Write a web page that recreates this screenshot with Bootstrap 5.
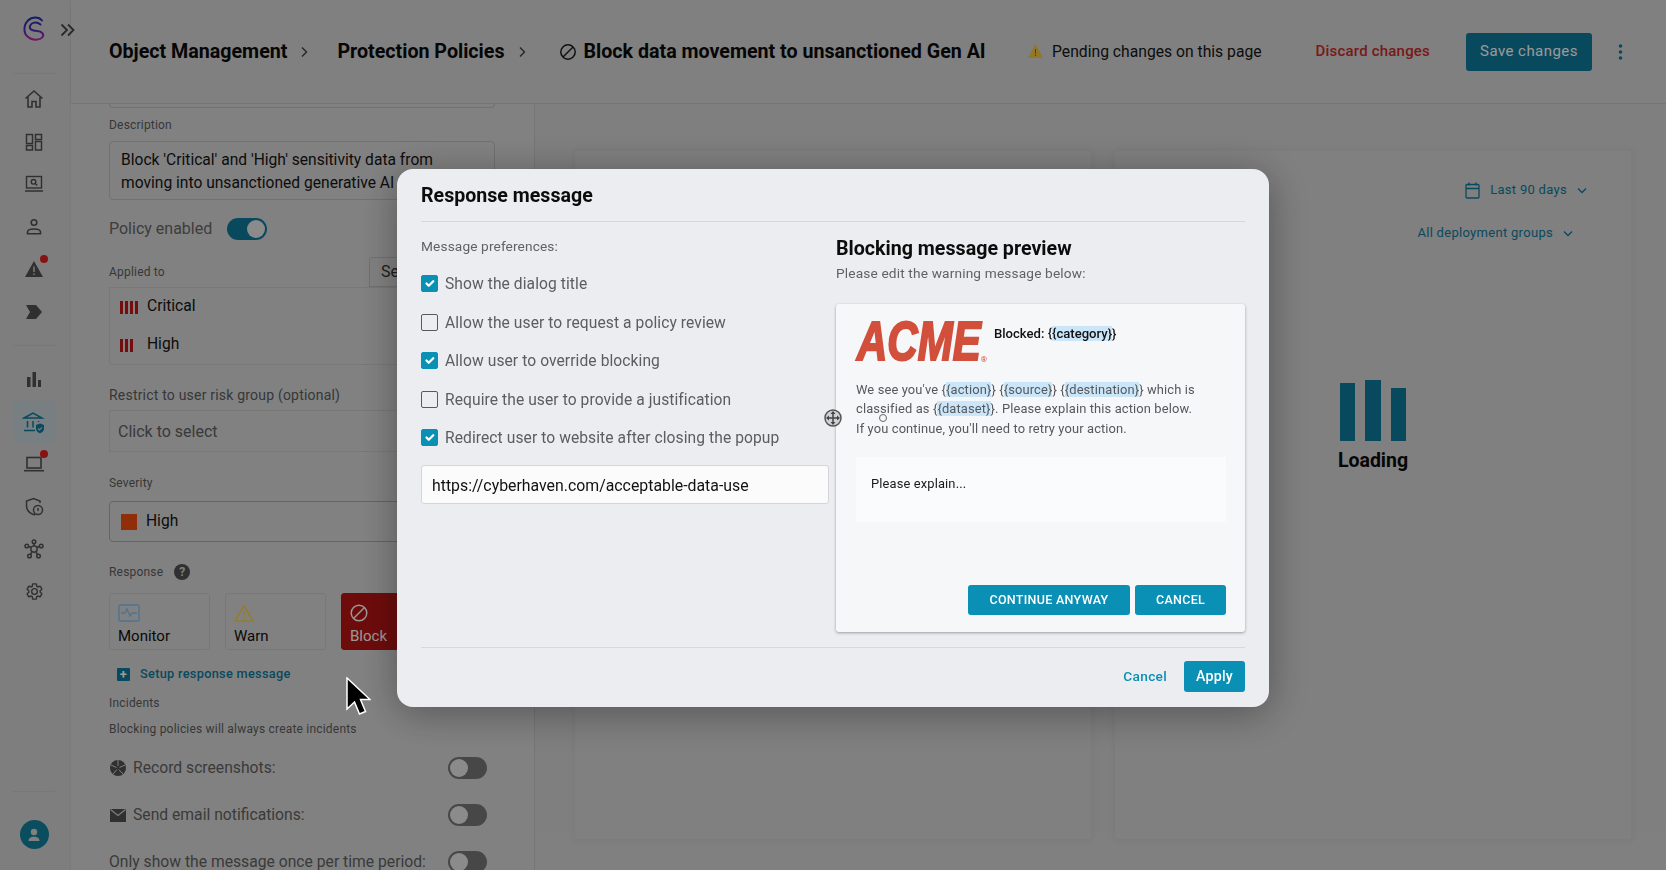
<!doctype html>
<html lang="en">
<head>
<meta charset="utf-8">
<title>Block data movement to unsanctioned Gen AI</title>
<link href="https://cdn.jsdelivr.net/npm/bootstrap@5.3.0/dist/css/bootstrap.min.css" rel="stylesheet">
<style>
html,body{height:100%;overflow:hidden}
body{font-family:Roboto,"Liberation Sans",sans-serif;background:#d5d5d5;color:#0a0a0a}
.modal-backdrop.show{opacity:.4}
.app-shell{height:870px}
.side-rail{width:71px;flex:none;background:#d3d3d3;border-right:1px solid #cdcdcd}
.rail-logo{height:74px;margin:0 15px 0 13px;border-bottom:1px solid #c8c8c8;position:relative}
.rail-logo .lg{position:absolute;left:8px;top:15px}
.rail-logo .ex{position:absolute;left:46px;top:21px}
.rail-group{padding-top:4px}
.rail-sep{height:1px;background:#c8c8c8;margin:12px 15px 12px 13px}
.rail-item{height:42.5px;margin:0 15px 0 13px;position:relative;border-radius:4px;color:#505050}
.rail-item.on{background:#c6d4da;color:#107a9b}
.rail-dot{position:absolute;width:8px;height:8px;border-radius:50%;background:#e02020;right:7px;top:7px}
.rail-foot{margin:auto 15px 0 13px;border-top:1px solid #c8c8c8;height:79px}
.user-pic{width:29px;height:29px;margin-top:28px;border-radius:50%;background:#12809f}
.main-col{min-width:0}
.top-head{height:104px;flex:none;padding:0 43px 0 38px;background:#d5d5d5;border-bottom:1px solid #c4c4c4;box-shadow:0 1px 3px rgba(0,0,0,.08)}
.crumb{font-size:19.65px;font-weight:700;white-space:nowrap}
.crumb-sep{margin:0 28px 0 13px;color:#404040}
.block-ic{margin:0 7px 0 4px}
.pend-txt{font-size:15.7px;color:#161616;margin-left:9px;white-space:nowrap}
.pend-box{margin-right:54px}
.discard{font-size:15px;font-weight:500;color:#cb2a2a;letter-spacing:.2px;margin-right:36px;white-space:nowrap}
.save-btn{width:126px;height:38px;background:#107a9b;border:0;color:#fff;border-radius:3px;font-size:15px;font-weight:400;letter-spacing:.45px;padding:0}
.more-dots{margin-left:26px;color:#107a9b}
.form-pane{width:464px;flex:none;padding:0 39px 0 38px;background:#d8d8d8;border-right:1px solid #c4c4c4;overflow:hidden}
.clip-box{height:4px;border:1px solid #bdbdbd;border-top:0;border-radius:0 0 4px 4px}
.tiny-lab{font-size:12px;line-height:16px;color:#5c5c5c;letter-spacing:.2px}
.lab-desc{margin-top:9px}
.mid-lab{font-size:14px;line-height:20px;color:#5c5c5c;letter-spacing:.2px;margin-top:20px}
.desc-box{margin-top:8px;height:59px;padding:7px 11px;border:1px solid #bdbdbd;border-radius:4px;font-size:15.6px;line-height:23px;color:#141414;white-space:nowrap;overflow:hidden}
.pol-row{margin-top:18px;height:22px;font-size:16px;color:#666;gap:15px}
.sw{width:39px;height:22px;border-radius:11px;background:#777;position:relative;flex:none}
.sw::after{content:"";position:absolute;left:2px;top:2px;width:18px;height:18px;border-radius:50%;background:#e8e8e8}
.sw.on{background:#107a9b;width:40px}
.sw.on::after{left:20px}
.apply-row{margin-top:17px;height:30px}
.sel-btn{margin-left:auto;width:126px;height:30px;border:1px solid #bdbdbd;border-radius:3px 3px 0 0;padding:2px 11px;font-size:16px;color:#333}
.sev-list{height:78px;border:1px solid #c8c8c8;border-radius:0 0 3px 3px}
.sev-li{height:38px;padding-left:10px;font-size:15.6px;color:#141414;gap:9px}
.sbars{gap:2px;width:18px;height:13px}
.sbars i{display:block;width:3px;height:13px;background:#c21717}
.pick-box{margin-top:5px;height:42px;border:1px solid #c8c8c8;padding:0 8px;font-size:16px;color:#606060;line-height:42px}
.lab-sev{margin-top:23px}
.sev-box{margin-top:10px;height:41px;border:1px solid #a8a8a8;border-radius:4px;padding-left:11px;font-size:15.6px;color:#141414}
.sev-sq{width:16px;height:16px;background:#f04e10;margin-right:9px}
.help-dot{width:16px;height:16px;border-radius:50%;background:#505050;color:#d5d5d5;font-size:12px;font-weight:700;line-height:16px;text-align:center;margin-left:11px}
.lab-resp{margin-top:22px}
.resp-row{margin-top:13px;gap:15px}
.resp-card{width:101px;height:57px;flex:none;border:1px solid #c8c8c8;border-radius:3px;padding:10px 8px 0;font-size:15px;line-height:20px;color:#0f0f0f}
.resp-card svg{display:block;margin-bottom:4px}
.resp-card.act{background:#b81414;border-color:#b81414;color:#fff}
.setup-row{margin:14px 0 0 8px;height:20px;font-size:12.75px;font-weight:500;color:#107a9b;letter-spacing:.3px}
.setup-ic{width:13px;height:13px;background:#107a9b;color:#fff;font-size:13px;font-weight:700;line-height:13px;text-align:center;margin-right:10px;border-radius:1px}
.lab-inc{margin-top:11px}
.lab-blk{margin:10px 0 20px}
.opt-row{height:22px;font-size:15.7px;color:#626262;margin-bottom:25px;white-space:nowrap}
.opt-row .sw{margin-left:auto;margin-right:8px}
.opt-ic{margin-right:7px;margin-left:1px}
.chart-zone{padding:46px 34px 0 39px;gap:22px;height:727px;background:#d4d4d4}
.chart-card{flex:1 1 0;height:690px;background:#d5d5d5;border:1px solid #cfcfcf;box-shadow:0 0 8px rgba(0,0,0,.05);border-radius:3px}
.filt-wrap{padding:28px 44px 0 0}
.filt-row{height:22px;font-size:13px;font-weight:400;color:#107a9b;letter-spacing:.3px;justify-content:flex-end;gap:10px}
.filt-row+.filt-row{margin-top:21px;padding-right:14px}
.load-bars{height:61px;margin-top:136px;gap:10px}
.load-bars i{display:block;width:15.5px;background:#107a9b}
.load-bars .b1{height:58px}.load-bars .b2{height:61px}.load-bars .b3{height:53px}
.load-txt{font-size:19.5px;font-weight:700;color:#0a0a0a;text-align:center;margin-top:8px;line-height:24px}
.resp-dialog{max-width:872px;margin:169px auto 0}
.resp-dialog .modal-content{height:538px;background:#ebedf0;border:0;border-radius:16px;padding:0 24px;box-shadow:0 6px 40px rgba(0,0,0,.35)}
.resp-dialog .modal-header{height:53px;padding:0;border-bottom:1px solid #d6d8dc;align-items:flex-end;padding-bottom:13px}
.resp-dialog .modal-title{font-size:19.6px;font-weight:700;line-height:24px;color:#0c0c0c}
.resp-dialog .modal-body{height:425px;flex:none;padding:0;gap:7px}
.resp-dialog .modal-footer{height:60px;padding:0 0 2px;border-top:1px solid #d6d8dc;gap:16px;flex-wrap:nowrap}
.resp-dialog .modal-footer>*{margin:0}
.pref-col{width:408px;flex:none;padding-top:15px}
.prev-col{flex:1;min-width:0;padding-top:15px}
.pref-lab{font-size:13.7px;line-height:18px;color:#5f6266;letter-spacing:.12px;margin-bottom:18px}
.pref-check{min-height:0;height:38.6px;margin:0;padding:0;display:flex;align-items:flex-start;gap:7px}
.pref-check .form-check-input{width:17px;height:17px;margin:2px 0 0 0;float:none;flex:none;border:1.5px solid #5a5a5a;border-radius:2px;background-color:transparent}
.pref-check .form-check-input:checked{background-color:#0a8fb5;border-color:#0a8fb5}
.pref-check .form-check-label{font-size:15.6px;line-height:21px;padding-top:1px;color:#5a5d61;letter-spacing:.08px}
.url-input{height:39px;margin-top:-.5px;padding:1px 10px 0;font-size:15.85px;color:#111;background:#fbfbfc;border:1px solid #d4d6da;border-radius:3px}
.prev-h{font-size:19.65px;font-weight:700;line-height:24px;color:#0c0c0c;margin:0}
.prev-sub{font-size:13.7px;line-height:18px;margin:3px 0 22px;color:#5f6266;letter-spacing:.15px}
.prev-card{height:328px;background:#f6f7f9;border-radius:3px;box-shadow:0 1px 3px rgba(0,0,0,.35);padding:17px 19px 17px 20px}
.acme-box{width:129px;height:40px;flex:none;position:relative;margin-right:9px;overflow:visible}
.acme-word{position:absolute;left:1px;top:-1px;font-family:"Liberation Sans",sans-serif;font-weight:700;font-style:italic;font-size:56px;line-height:42px;color:#d24f3b;-webkit-text-stroke:2.2px #d24f3b;transform:scaleX(.75);transform-origin:0 0;white-space:nowrap}
.acme-reg{position:absolute;right:-2px;bottom:-3px;font-size:8px;line-height:8px;color:#d24f3b}
.block-ttl{font-size:13.1px;font-weight:500;line-height:17px;color:#111;margin-top:4px}
.tok{background:#cbe6f9}
.msg-txt{margin:19px 0 0;font-size:12.9px;line-height:19.4px;color:#55585c;letter-spacing:.13px;white-space:nowrap}
.explain{height:65px;margin-top:19px;background:#fafbfc;padding:17px 15px;font-size:12.9px;line-height:20px;color:#1a1a1a;letter-spacing:.14px}
.act-row{margin-top:63px;gap:5px}
.act-btn{height:30px;background:#0a8fb5;border:0;border-radius:3px;color:#fff;font-size:12.5px;font-weight:500;letter-spacing:.3px;padding:1px 0 0;white-space:nowrap}
.act-btn.w1{width:162px}.act-btn.w2{width:91px}
.foot-cancel{font-size:13.7px;font-weight:500;color:#0a8fb5;letter-spacing:.3px;text-decoration:none;margin-right:1px!important}
.apply-btn{width:61px;height:31px;background:#0a8fb5;border:0;border-radius:3px;color:#fff;font-size:14.2px;font-weight:500;letter-spacing:.2px;padding:0}
.cursor-layer{position:fixed;z-index:1060;pointer-events:none}
.cursor-arrow{left:345px;top:677px}
.cursor-move{left:824px;top:409px}
.cursor-ring{left:879px;top:414px;width:8px;height:8px;border:1px solid #666;border-radius:50%}
</style>
</head>
<body>
<div class="app-shell d-flex">
  <nav class="side-rail d-flex flex-column">
    <div class="rail-logo">
      <svg class="lg" width="27" height="27" viewBox="0 0 27 27" fill="none"><defs><linearGradient id="lgr" x1="0" y1="0" x2="0" y2="1"><stop offset="0" stop-color="#2434a8"/><stop offset=".55" stop-color="#4a2cb0"/><stop offset="1" stop-color="#c81fa8"/></linearGradient></defs><path d="M21 5.5C18 1.5 11 1.5 7 5.500C2.500 10 2 18 7 22C11 25.500 19 25.500 21.500 22C23.500 19 21 16.500 16 16C11 15.500 8 14.500 9 11C10.500 7 16 6.500 19.500 9.500" stroke="url(#lgr)" stroke-width="2" stroke-linecap="round"/></svg>
      <svg class="ex" width="18" height="18" viewBox="0 0 18 18" fill="none" stroke="#454545" stroke-width="1.800"><path d="M2.500 3.500 8 9l-5.500 5.500M9 3.500 14.500 9 9 14.500"/></svg>
    </div>
    <div class="rail-group">
      <div class="rail-item d-flex align-items-center justify-content-center"><svg width="20" height="20" viewBox="0 0 20 20" fill="none" stroke="currentColor" stroke-width="1.600"><path d="M1.500 9.500 10 2l8.500 7.500M4 8v10h4v-5.500h4V18h4V8"/></svg></div>
      <div class="rail-item d-flex align-items-center justify-content-center"><svg width="18" height="18" viewBox="0 0 18 18" fill="none" stroke="currentColor" stroke-width="1.500"><rect x="1.500" y="1.500" width="6" height="9"/><rect x="10.500" y="1.500" width="6" height="5"/><rect x="1.500" y="12.500" width="6" height="4.500"/><rect x="10.500" y="8.500" width="6" height="8.500"/></svg></div>
      <div class="rail-item d-flex align-items-center justify-content-center"><svg width="20" height="18" viewBox="0 0 20 18" fill="none" stroke="currentColor" stroke-width="1.400"><rect x="2.500" y="1.500" width="15" height="11.500"/><circle cx="9.500" cy="6.800" r="2.300"/><path d="m11.200 8.500 2 2M1 16h18" /></svg></div>
      <div class="rail-item d-flex align-items-center justify-content-center"><svg width="18" height="18" viewBox="0 0 18 18" fill="none" stroke="currentColor" stroke-width="1.600"><circle cx="9" cy="4.500" r="2.800"/><path d="M2.500 15.700V14c0-2 3-3 6.500-3s6.500 1 6.500 3v1.700z"/></svg></div>
      <div class="rail-item d-flex align-items-center justify-content-center"><svg width="20" height="18" viewBox="0 0 20 18"><path d="M10 1 19 17H1z" fill="currentColor"/><path d="M10 6.500v5.500M10 13.500v1.500" stroke="#d3d3d3" stroke-width="1.400"/></svg><span class="rail-dot"></span></div>
      <div class="rail-item d-flex align-items-center justify-content-center"><svg width="18" height="16" viewBox="0 0 18 16"><path d="M1 1h10l6 7-6 7H1l4-7z" fill="currentColor"/></svg></div>
    </div>
    <div class="rail-sep"></div>
    <div class="rail-group pt-0">
      <div class="rail-item d-flex align-items-center justify-content-center"><svg width="16" height="16" viewBox="0 0 16 16" fill="currentColor"><rect x="1" y="6" width="3.500" height="10"/><rect x="6.500" y="1" width="3.500" height="15"/><rect x="12" y="9" width="3" height="7"/></svg></div>
      <div class="rail-item on d-flex align-items-center justify-content-center"><svg width="24" height="24" viewBox="0 0 24 24" fill="none" stroke="currentColor" stroke-width="1.500"><path d="M2 8 11 3l9 5zM5.500 11v6.500M11 11v6.500M16.500 11v1M2 20.500h11"/><path d="M14 15l4-1.500 4 1.500v3.500c0 2.400-1.700 4-4 4.800-2.300-.8-4-2.400-4-4.800z" fill="currentColor" stroke="none"/><path d="m16 18.500 1.500 1.500 2.500-2.700" stroke="#c6d4da" stroke-width="1.100"/></svg></div>
      <div class="rail-item d-flex align-items-center justify-content-center"><svg width="20" height="16" viewBox="0 0 20 16" fill="none" stroke="currentColor" stroke-width="1.600"><rect x="3" y="1.500" width="14" height="10.500"/><path d="M0 14.700h20"/></svg><span class="rail-dot"></span></div>
      <div class="rail-item d-flex align-items-center justify-content-center"><svg width="20" height="20" viewBox="0 0 20 20" fill="none" stroke="currentColor" stroke-width="1.500"><path d="M11 18C5.500 16.500 2.500 13 2.500 8.500V4L9.500 1.500 16 4v2"/><circle cx="14" cy="13" r="4.500"/><path d="M14 11v3"/></svg></div>
      <div class="rail-item d-flex align-items-center justify-content-center"><svg width="20" height="20" viewBox="0 0 20 20" fill="none" stroke="currentColor" stroke-width="1.500"><path d="m10 6.500 3 1.700v3.600l-3 1.700-3-1.700V8.200z"/><circle cx="10" cy="2.800" r="1.800"/><circle cx="2.800" cy="7" r="1.800"/><circle cx="17.200" cy="7" r="1.800"/><circle cx="5.500" cy="17" r="1.800"/><circle cx="14.500" cy="17" r="1.800"/><path d="M10 4.600v1.900M4.400 7.500 7 8.300M15.600 7.500 13 8.300M6.500 15.500 8 13M13.500 15.500 12 13"/></svg></div>
      <div class="rail-item d-flex align-items-center justify-content-center"><svg width="19" height="19" viewBox="0 0 24 24" fill="none" stroke="currentColor" stroke-width="1.800"><path d="M19.140 12.940c.04-.3.060-.61.060-.94 0-.32-.02-.64-.07-.94l2.030-1.580c.18-.14.230-.41.120-.61l-1.920-3.320c-.12-.22-.37-.29-.59-.22l-2.390.96c-.5-.38-1.030-.7-1.620-.94l-.36-2.540c-.04-.24-.24-.41-.48-.41h-3.840c-.24 0-.43.170-.47.410l-.36 2.540c-.59.240-1.130.570-1.620.940l-2.390-.96c-.22-.08-.47 0-.59.220L2.740 8.870c-.12.210-.08.470.120.610l2.030 1.580c-.05.300-.09.630-.09.940s.02.640.07.940l-2.030 1.580c-.18.140-.23.410-.12.610l1.920 3.320c.12.220.370.290.590.220l2.390-.96c.5.380 1.030.7 1.620.94l.36 2.540c.05.240.240.410.480.410h3.840c.24 0 .44-.17.470-.41l.36-2.540c.59-.24 1.130-.56 1.620-.94l2.390.96c.22.080.470 0 .59-.22l1.920-3.320c.12-.22.070-.47-.12-.61l-2.010-1.580zM12 15.600c-1.980 0-3.600-1.620-3.600-3.600s1.620-3.600 3.600-3.600 3.600 1.620 3.600 3.600-1.620 3.600-3.600 3.600z"/></svg></div>
    </div>
    <div class="rail-foot d-flex justify-content-center">
      <div class="user-pic d-flex align-items-center justify-content-center"><svg width="16" height="16" viewBox="0 0 16 16" fill="#d5d5d5"><circle cx="8" cy="5" r="3.200"/><path d="M2.500 14c0-3 2.500-4.300 5.500-4.300s5.500 1.300 5.500 4.300z"/></svg></div>
    </div>
  </nav>
  <div class="main-col flex-fill d-flex flex-column">
    <header class="top-head d-flex align-items-center">
      <span class="crumb">Object Management</span>
      <svg class="crumb-sep" width="9" height="12" viewBox="0 0 9 12" fill="none" stroke="currentColor" stroke-width="1.400"><path d="m2 1.500 4.500 4.500L2 10.500"/></svg>
      <span class="crumb">Protection Policies</span>
      <svg class="crumb-sep" width="9" height="12" viewBox="0 0 9 12" fill="none" stroke="currentColor" stroke-width="1.400"><path d="m2 1.500 4.500 4.500L2 10.500"/></svg>
      <svg class="block-ic" width="18" height="18" viewBox="0 0 18 18" fill="none" stroke="#1c1c1c" stroke-width="1.500"><circle cx="9" cy="9" r="7.200"/><path d="M4 14 14 4"/></svg>
      <span class="crumb">Block data movement to unsanctioned Gen AI</span>
      <div class="pend-box ms-auto d-flex align-items-center">
        <svg width="15" height="14" viewBox="0 0 15 14"><path d="M7.500 0 15 14H0z" fill="#f4c63f"/><path d="M7.500 5v4.500M7.500 10.500V12" stroke="#8a6a18" stroke-width="1"/></svg>
        <span class="pend-txt">Pending changes on this page</span>
      </div>
      <span class="discard">Discard changes</span>
      <button class="save-btn" type="button">Save changes</button>
      <svg class="more-dots" width="5" height="16" viewBox="0 0 5 16" fill="currentColor"><circle cx="2.500" cy="2" r="1.800"/><circle cx="2.500" cy="8" r="1.800"/><circle cx="2.500" cy="14" r="1.800"/></svg>
    </header>
    <div class="d-flex flex-fill">
      <section class="form-pane">
        <div class="clip-box"></div>
        <div class="tiny-lab lab-desc">Description</div>
        <div class="desc-box">Block 'Critical' and 'High' sensitivity data from<br>moving into unsanctioned generative AI tools</div>
        <div class="pol-row d-flex align-items-center"><span>Policy enabled</span><span class="sw on"></span></div>
        <div class="apply-row d-flex align-items-center"><span class="tiny-lab">Applied to</span><span class="sel-btn">Select</span></div>
        <div class="sev-list">
          <div class="sev-li d-flex align-items-center"><span class="sbars d-flex"><i></i><i></i><i></i><i></i></span>Critical</div>
          <div class="sev-li d-flex align-items-center"><span class="sbars d-flex"><i></i><i></i><i></i></span>High</div>
        </div>
        <div class="mid-lab">Restrict to user risk group (optional)</div>
        <div class="pick-box">Click to select</div>
        <div class="tiny-lab lab-sev">Severity</div>
        <div class="sev-box d-flex align-items-center"><span class="sev-sq"></span>High</div>
        <div class="tiny-lab d-flex align-items-center lab-resp">Response<span class="help-dot">?</span></div>
        <div class="resp-row d-flex">
          <div class="resp-card"><svg width="22" height="18" viewBox="0 0 22 18" fill="none" stroke="#85c0f0" stroke-width="1.400"><rect x="1" y="1" width="20" height="16" rx="1"/><path d="M3 9h4l2-4 3 7 2-3h5"/></svg>Monitor</div>
          <div class="resp-card"><svg width="20" height="18" viewBox="0 0 20 18" fill="none" stroke="#f5cf4a" stroke-width="1.500"><path d="M10 1.500 19 17H1z"/><path d="M10 7v5M10 13.500v1.500"/></svg>Warn</div>
          <div class="resp-card act"><svg width="18" height="18" viewBox="0 0 18 18" fill="none" stroke="#fff" stroke-width="1.500"><circle cx="9" cy="9" r="7.800"/><path d="M3.500 14.500 14.500 3.500"/></svg>Block</div>
        </div>
        <div class="setup-row d-flex align-items-center"><span class="setup-ic">+</span>Setup response message</div>
        <div class="tiny-lab lab-inc">Incidents</div>
        <div class="tiny-lab lab-blk">Blocking policies will always create incidents</div>
        <div class="opt-row d-flex align-items-center"><svg class="opt-ic" width="16" height="16" viewBox="0 0 16 16"><circle cx="8" cy="8" r="8" fill="#505050"/><path d="M8 0v6M15 5 9.500 7.500M13 14 8.800 9.500M3 14l3.800-4.500M1 5l5.500 2.500" stroke="#d5d5d5" stroke-width="1"/></svg>Record screenshots:<span class="sw"></span></div>
        <div class="opt-row d-flex align-items-center"><svg class="opt-ic" width="16" height="13" viewBox="0 0 16 13"><rect width="16" height="13" fill="#505050"/><path d="m.5.500 7.500 6 7.500-6" fill="none" stroke="#d5d5d5" stroke-width="1.200"/></svg>Send email notifications:<span class="sw"></span></div>
        <div class="opt-row d-flex align-items-center">Only show the message once per time period:<span class="sw"></span></div>
      </section>
      <section class="chart-zone flex-fill d-flex">
        <div class="chart-card"></div>
        <div class="chart-card">
          <div class="filt-wrap">
            <div class="filt-row d-flex align-items-center"><svg width="15" height="17" viewBox="0 0 15 17" fill="none" stroke="currentColor" stroke-width="1.300"><rect x="1" y="2.500" width="13" height="13.500" rx="1"/><path d="M1 6.500h13M4 .5v3M11 .5v3"/></svg><span>Last 90 days</span><svg width="10" height="7" viewBox="0 0 10 7" fill="none" stroke="currentColor" stroke-width="1.300"><path d="m1 1.500 4 4 4-4"/></svg></div>
            <div class="filt-row d-flex align-items-center"><span>All deployment groups</span><svg width="10" height="7" viewBox="0 0 10 7" fill="none" stroke="currentColor" stroke-width="1.300"><path d="m1 1.500 4 4 4-4"/></svg></div>
          </div>
          <div class="load-bars d-flex justify-content-center align-items-end"><i class="b1"></i><i class="b2"></i><i class="b3"></i></div>
          <div class="load-txt">Loading</div>
        </div>
      </section>
    </div>
  </div>
</div>

<div class="modal-backdrop fade show"></div>
<div class="modal fade show d-block" tabindex="-1" role="dialog" aria-modal="true">
  <div class="modal-dialog resp-dialog">
    <div class="modal-content">
      <div class="modal-header"><h5 class="modal-title">Response message</h5></div>
      <div class="modal-body d-flex">
        <div class="pref-col">
          <div class="pref-lab">Message preferences:</div>
          <div class="form-check pref-check"><input class="form-check-input" type="checkbox" id="c1" checked><label class="form-check-label" for="c1">Show the dialog title</label></div>
          <div class="form-check pref-check"><input class="form-check-input" type="checkbox" id="c2"><label class="form-check-label" for="c2">Allow the user to request a policy review</label></div>
          <div class="form-check pref-check"><input class="form-check-input" type="checkbox" id="c3" checked><label class="form-check-label" for="c3">Allow user to override blocking</label></div>
          <div class="form-check pref-check"><input class="form-check-input" type="checkbox" id="c4"><label class="form-check-label" for="c4">Require the user to provide a justification</label></div>
          <div class="form-check pref-check"><input class="form-check-input" type="checkbox" id="c5" checked><label class="form-check-label" for="c5">Redirect user to website after closing the popup</label></div>
          <input class="form-control url-input" type="text" value="https://cyberhaven.com/acceptable-data-use">
        </div>
        <div class="prev-col">
          <h5 class="prev-h">Blocking message preview</h5>
          <p class="prev-sub">Please edit the warning message below:</p>
          <div class="prev-card">
            <div class="d-flex align-items-start">
              <div class="acme-box"><span class="acme-word">ACME</span><span class="acme-reg">®</span></div>
              <div class="block-ttl">Blocked: {<span class="tok">{category}</span>}</div>
            </div>
            <p class="msg-txt">We see you've {<span class="tok">{action}</span>} {<span class="tok">{source}</span>} {<span class="tok">{destination}</span>} which is<br>classified as {<span class="tok">{dataset}</span>}. Please explain this action below.<br>If you continue, you'll need to retry your action.</p>
            <div class="explain">Please explain...</div>
            <div class="act-row d-flex justify-content-end">
              <button class="act-btn w1" type="button">CONTINUE ANYWAY</button>
              <button class="act-btn w2" type="button">CANCEL</button>
            </div>
          </div>
        </div>
      </div>
      <div class="modal-footer justify-content-end">
        <a class="foot-cancel" href="#">Cancel</a>
        <button class="apply-btn" type="button">Apply</button>
      </div>
    </div>
  </div>
</div>
<svg class="cursor-layer cursor-arrow" width="26" height="42" viewBox="0 0 26 42"><path d="M2 1v31l7.500-7 5 12 6-2.500-5-12H25z" fill="#000" stroke="#fff" stroke-width="1.500"/></svg>
<svg class="cursor-layer cursor-move" width="18" height="18" viewBox="0 0 18 18"><circle cx="9" cy="9" r="8" fill="#d0d2d5" stroke="#555" stroke-width="1.500"/><path d="M9 3v12M3 9h12" stroke="#444" stroke-width="1.500"/><path d="m9 2 2.500 3h-5zM9 16l2.500-3h-5zM2 9l3-2.500v5zM16 9l-3-2.500v5z" fill="#444"/></svg>
<span class="cursor-layer cursor-ring"></span>
</body>
</html>
